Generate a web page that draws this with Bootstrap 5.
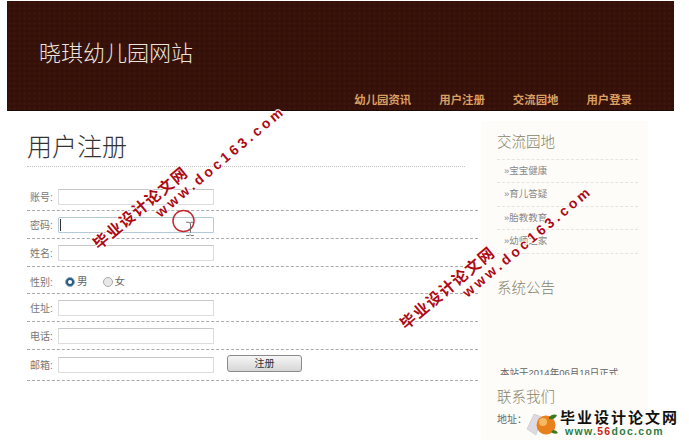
<!DOCTYPE html>
<html lang="zh-CN">
  <head>
    <meta charset="UTF-8" />
    <meta name="viewport" content="width=device-width, initial-scale=1.0" />
    <title>用户注册</title>
    <link
      href="https://cdn.jsdelivr.net/npm/bootstrap@5.3.0/dist/css/bootstrap.min.css"
      rel="stylesheet"
    />
    <style>
      html,
      body {
        height: 440px;
        overflow: hidden;
      }
      body {
        background: #fff;
        font-family: "Liberation Sans", "Noto Sans CJK SC", sans-serif;
        font-size: 10px;
        color: #666;
      }
      .site-head {
        margin: 1px 15px 0 7px;
        height: 110px;
        padding: 0 42px 0 32px;
        background-color: #36110a;
        background-image: radial-gradient(rgba(84, 38, 20, 0.3) 0.8px, transparent 1.2px),
          radial-gradient(rgba(30, 6, 0, 0.3) 0.8px, transparent 1.2px);
        background-size: 5px 5px;
        background-position: 0 0, 2.5px 2.5px;
        border-bottom: 1px solid #1c0c08;
      }
      .site-title {
        font-size: 22px;
        font-weight: 300;
        color: #ece4dc;
        margin: 0;
        padding-top: 38px;
        line-height: 29px;
      }
      .head-links {
        gap: 28px;
        margin-top: 25px;
      }
      .head-links a {
        color: #d99f62;
        font-size: 11.4px;
        font-weight: 700;
        line-height: 14px;
        text-decoration: none;
      }
      .page-body {
        padding-left: 27px;
      }
      .form-side {
        width: 451px;
        padding-top: 10px;
      }
      .form-title {
        font-size: 25px;
        font-weight: 300;
        color: #333;
        line-height: 32px;
        width: 438px;
        height: 46px;
        margin: 0 0 16px;
        padding: 10px 0 3px 0;
        border-bottom: 1px dotted #c4c4c4;
      }
      .form-line {
        display: flex;
        align-items: center;
        height: 28px;
        padding-left: 3px;
        border-bottom: 1px dashed #aaa;
      }
      .form-line.tall {
        height: 31px;
      }
      .form-line.sex-line {
        height: 27px;
        padding-top: 3px;
      }
      .form-line label.field-name {
        width: 28px;
        padding-top: 1px;
        color: #777;
      }
      .plain-input {
        width: 156px;
        height: 16px;
        padding: 0;
        border: 1px solid #dcdcdc;
        border-top-color: #c4c8ca;
        border-radius: 1px;
        background: #fff;
      }
      .focus-box {
        position: relative;
      }
      .focus-box .plain-input {
        border-color: #b4cad6;
        display: block;
      }
      .focus-box::after {
        content: "";
        position: absolute;
        left: 2px;
        top: 2px;
        width: 1px;
        height: 12px;
        background: #333;
      }
      .sex-input {
        width: 10px;
        height: 10px;
        margin: 0 2px 0 7px;
        border: 1px solid #aaa;
        background-color: #e8e8e8;
      }
      .sex-input:checked {
        background-color: #2c5a7c;
        border-color: #8fb0cc;
      }
      .sex-text {
        margin-right: 15px;
        font-size: 10.5px;
      }
      .reg-btn {
        width: 75px;
        height: 17px;
        margin: -3px 0 0 13px;
        padding: 0;
        font-size: 10px;
        line-height: 13px;
        color: #333;
        border: 1px solid #8a8a8a;
        border-radius: 3px;
        background: linear-gradient(#f6f6f6, #d6d6d6);
      }
      .side-box {
        width: 167px;
        height: 319px;
        margin: 10px 0 0 3px;
        padding: 12px 10px 0 16px;
        background: #fefcf9;
      }
      .side-title {
        font-size: 14.5px;
        font-weight: 300;
        color: #85856a;
        line-height: 18px;
        margin: 0;
      }
      .side-links {
        margin-top: 8px;
        border-top: 1px dashed #e8e4dc;
      }
      .side-links li {
        height: 23.4px;
        line-height: 22px;
        padding-left: 7px;
        color: #888;
        font-size: 9.5px;
        border-bottom: 1px dashed #e8e4dc;
      }
      .notice-title {
        margin-top: 25px;
      }
      .notice-clip {
        height: 52px;
        margin-top: 26px;
        overflow: hidden;
      }
      .notice-clip p {
        margin: 43px 0 0 3px;
        line-height: 14px;
        color: #666;
        font-size: 9.5px;
      }
      .contact-title {
        margin-top: 13px;
      }
      .contact-text {
        margin-top: 8px;
        line-height: 12px;
        color: #666;
      }
      .stamp {
        position: absolute;
        transform-origin: 0 0;
        transform: rotate(-40deg);
        white-space: nowrap;
        color: #ae0a14;
        font-weight: 700;
        text-shadow: 1px 0 0 #fff, -1px 0 0 #fff, 0 1px 0 #fff, 0 -1px 0 #fff;
      }
      .stamp-cn {
        font-size: 15.5px;
        letter-spacing: 1.4px;
        line-height: 14px;
      }
      .stamp-url {
        font-size: 14px;
        letter-spacing: 3.4px;
        line-height: 16px;
        margin-left: 68px;
      }
      .click-mark {
        position: absolute;
        left: 172px;
        top: 209px;
      }
      .corner-logo {
        position: absolute;
        left: 526px;
        top: 410px;
        width: 160px;
        height: 30px;
      }
      .corner-logo svg {
        position: absolute;
        left: 0;
        top: 2px;
      }
      .logo-cn {
        position: absolute;
        left: 34px;
        top: 1px;
        font-size: 15px;
        font-weight: 700;
        letter-spacing: 2px;
        line-height: 14px;
        color: #111;
        white-space: nowrap;
      }
      .logo-url {
        position: absolute;
        left: 39px;
        top: 15px;
        font-size: 10.5px;
        font-weight: 700;
        letter-spacing: 1.3px;
        line-height: 12px;
        color: #2d7d46;
        white-space: nowrap;
      }
      .logo-url b {
        color: #c8281c;
      }
    </style>
  </head>
  <body>
    <header class="site-head">
      <h1 class="site-title">晓琪幼儿园网站</h1>
      <nav class="head-links d-flex justify-content-end">
        <a href="#">幼儿园资讯</a>
        <a href="#">用户注册</a>
        <a href="#">交流园地</a>
        <a href="#">用户登录</a>
      </nav>
    </header>

    <div class="page-body d-flex">
      <main class="form-side">
        <h2 class="form-title">用户注册</h2>
        <form>
          <div class="form-line">
            <label class="field-name">账号:</label>
            <input class="plain-input" type="text" />
          </div>
          <div class="form-line">
            <label class="field-name">密码:</label>
            <span class="focus-box"><input class="plain-input" type="password" /></span>
          </div>
          <div class="form-line">
            <label class="field-name">姓名:</label>
            <input class="plain-input" type="text" />
          </div>
          <div class="form-line sex-line">
            <label class="field-name">性别:</label>
            <input class="form-check-input sex-input mt-0" type="radio" name="sex" checked />
            <span class="sex-text">男</span>
            <input class="form-check-input sex-input mt-0 ms-0" type="radio" name="sex" />
            <span class="sex-text">女</span>
          </div>
          <div class="form-line">
            <label class="field-name">住址:</label>
            <input class="plain-input" type="text" />
          </div>
          <div class="form-line">
            <label class="field-name">电话:</label>
            <input class="plain-input" type="text" />
          </div>
          <div class="form-line tall">
            <label class="field-name">邮箱:</label>
            <input class="plain-input" type="text" />
            <button class="reg-btn" type="button">注册</button>
          </div>
        </form>
      </main>

      <aside class="side-box">
        <h3 class="side-title">交流园地</h3>
        <ul class="side-links list-unstyled mb-0">
          <li>»宝宝健康</li>
          <li>»育儿答疑</li>
          <li>»胎教教育</li>
          <li>»幼师之家</li>
        </ul>
        <h3 class="side-title notice-title">系统公告</h3>
        <div class="notice-clip">
          <p>本站于2014年06月18日正式</p>
        </div>
        <h3 class="side-title contact-title">联系我们</h3>
        <div class="contact-text">地址：</div>
      </aside>
    </div>

    <!-- watermarks over the page -->
    <div class="stamp" style="left: 91px; top: 241px">
      <div class="stamp-cn">毕业设计论文网</div>
      <div class="stamp-url">www.doc163.com</div>
    </div>
    <div class="stamp" style="left: 398px; top: 321px">
      <div class="stamp-cn">毕业设计论文网</div>
      <div class="stamp-url">www.doc163.com</div>
    </div>

    <svg class="click-mark" width="30" height="30" viewBox="0 0 30 30" fill="none">
      <circle cx="11.5" cy="12" r="10.5" stroke="#c42a32" stroke-width="1.5" />
      <path d="M16 15h3l1 1 1-1h3M20.5 16v10M16 29h3l1-1 1 1h3" stroke="#666" stroke-width="1" transform="translate(-1 -1) scale(.95)" />
    </svg>

    <div class="corner-logo">
      <svg width="34" height="26" viewBox="0 0 34 26">
        <path d="M1 17 8 2l8 3-6 18z" fill="#dedae4" stroke="#bbb" stroke-width=".5" />
        <circle cx="20" cy="13" r="9.5" fill="#e8801c" />
        <circle cx="17" cy="10" r="4" fill="#f6b860" />
        <path d="M23 5c3-3 6-3 8-2-1 3-4 5-8 4z" fill="#3d7a22" />
        <path d="M27 18c2 0 4 1 5 3-2 1-5 1-7-1z" fill="#3d7a22" />
      </svg>
      <div class="logo-cn">毕业设计论文网</div>
      <div class="logo-url">www.<b>56</b>doc.com</div>
    </div>
  </body>
</html>
